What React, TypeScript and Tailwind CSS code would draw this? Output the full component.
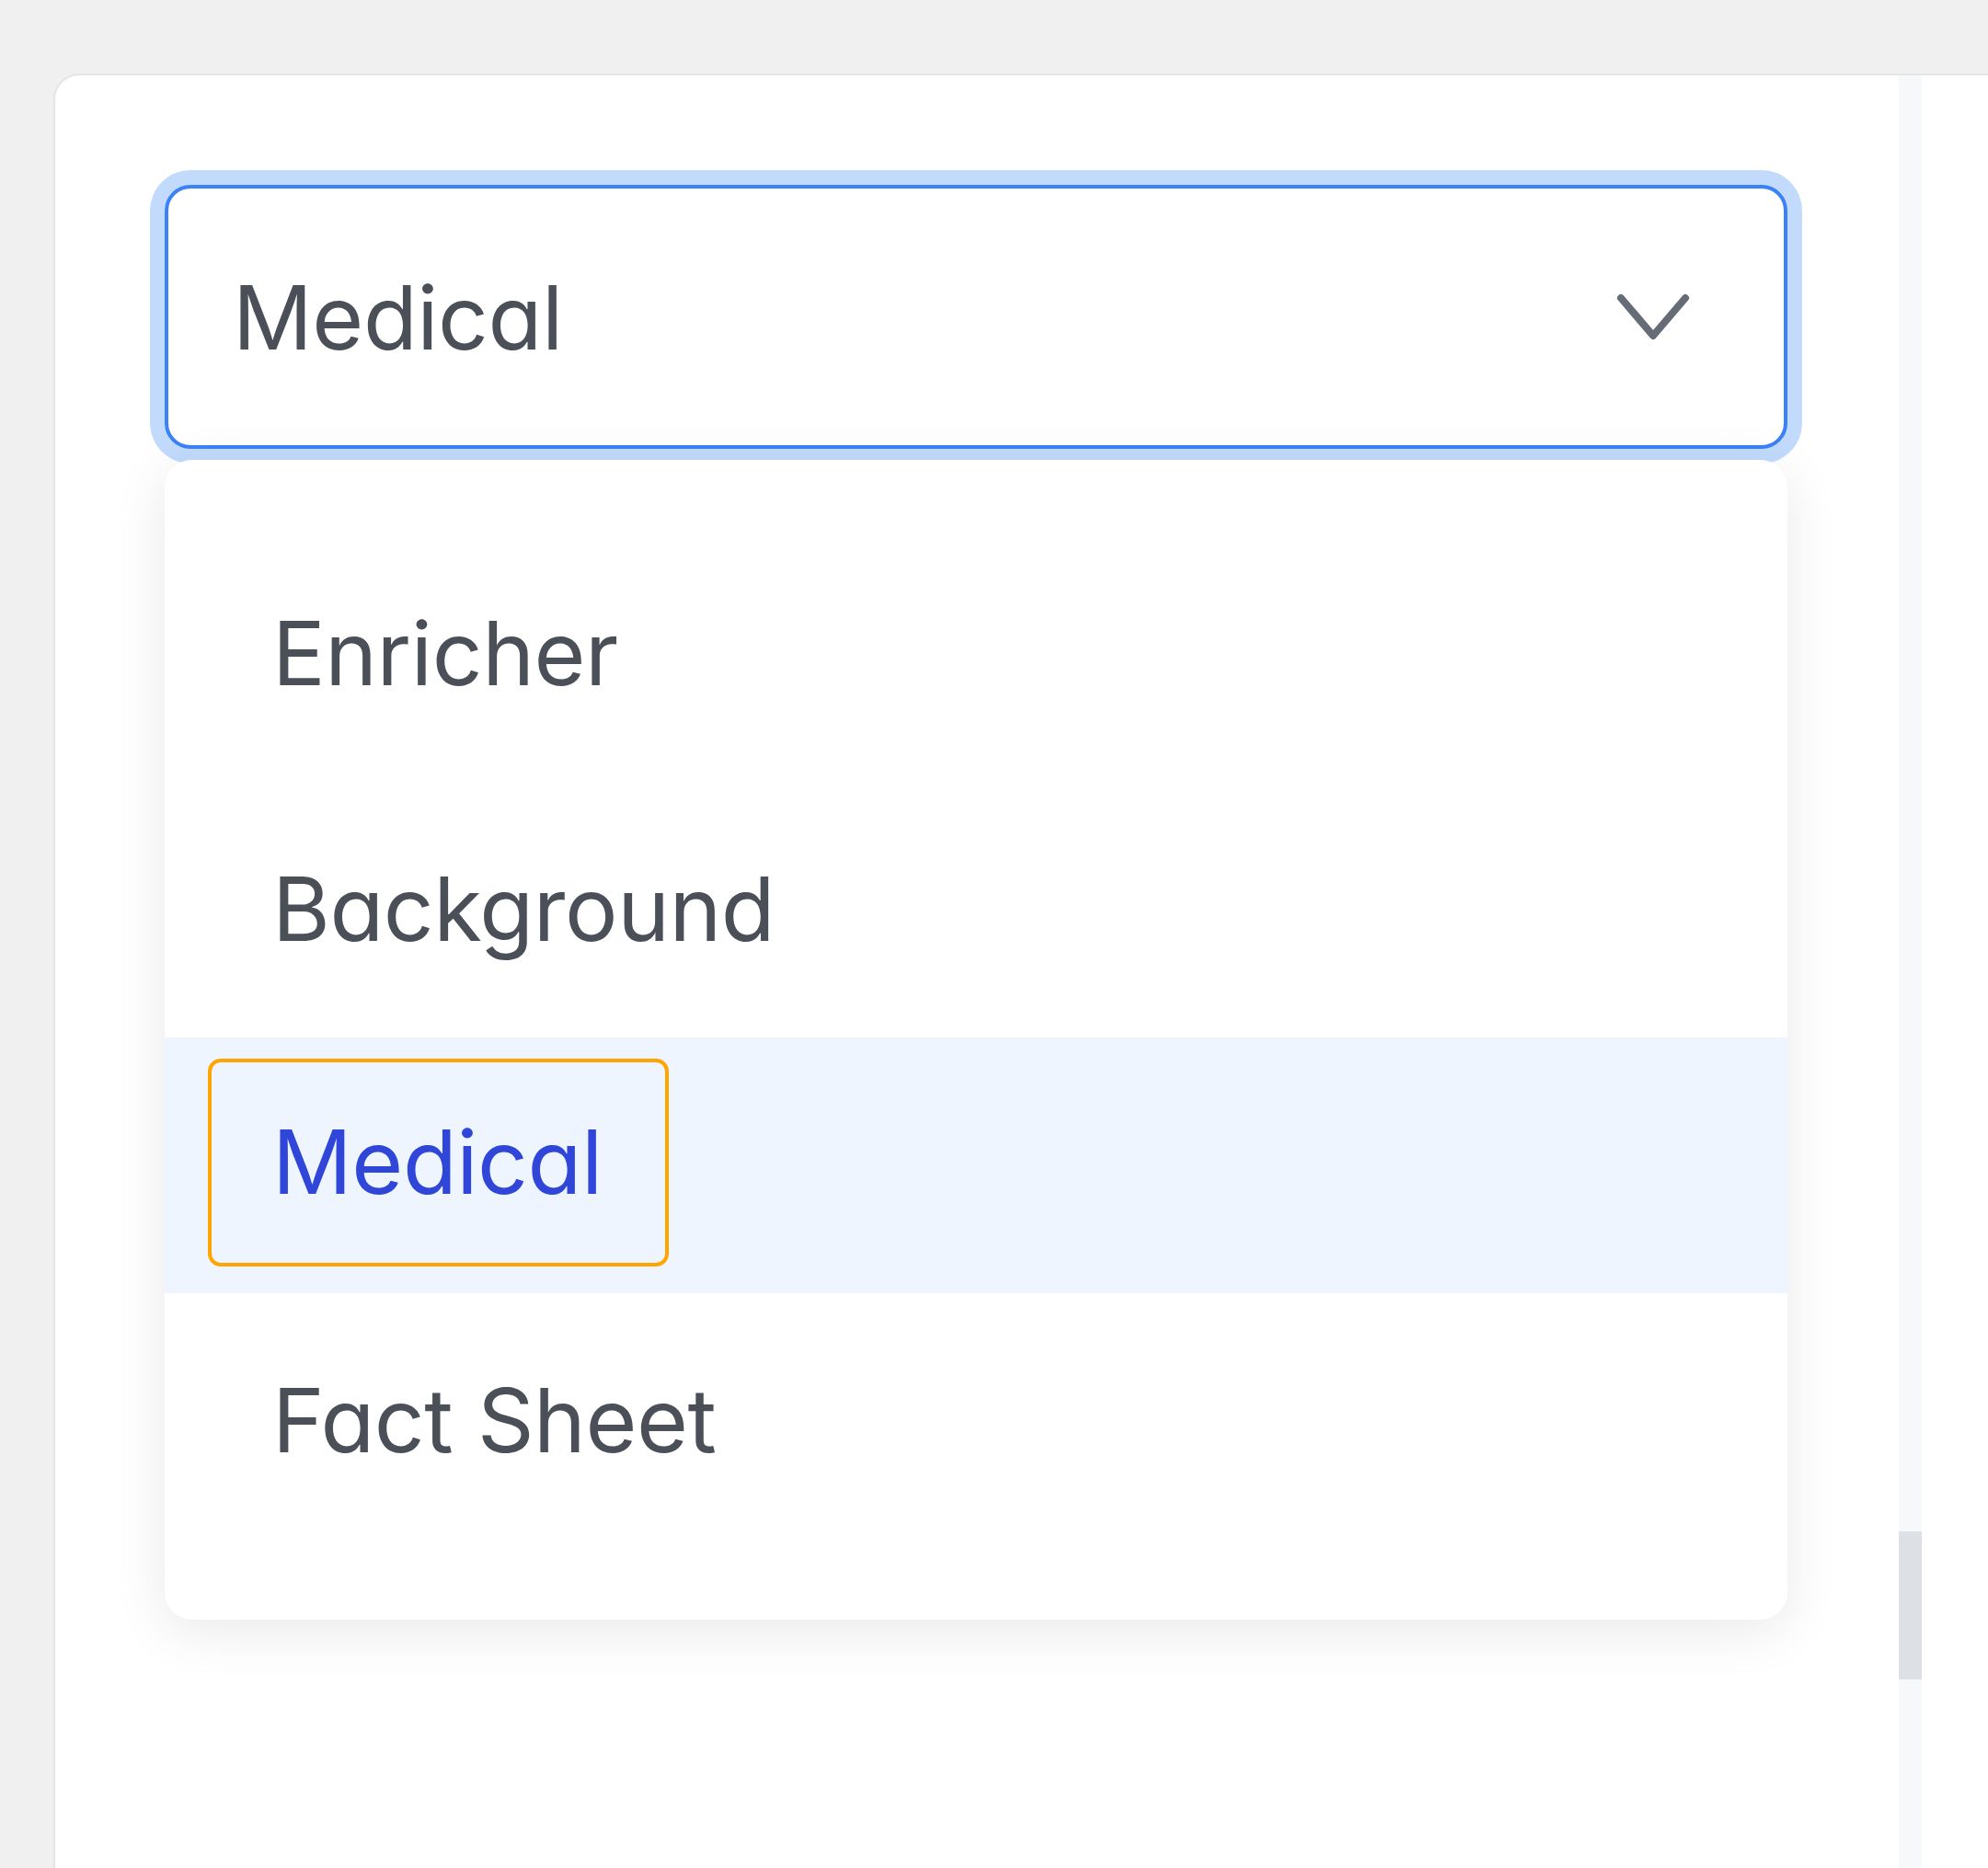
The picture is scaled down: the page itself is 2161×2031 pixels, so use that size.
import React from 'react';

const options = ['Enricher', 'Background', 'Medical', 'Fact Sheet'];

const fontStack = "font-['Inter','Noto_Sans',sans-serif] [font-feature-settings:'cv11'] tracking-[-0.025em]";

const Chevron = () => (
  <svg width="80" height="54" viewBox="0 0 80 54" fill="none">
    <path d="M5 6 L40 47 L75 6" stroke="#656c76" strokeWidth="8" strokeLinecap="round" strokeLinejoin="round" />
  </svg>
);

export default function App() {
  const selected = 'Medical';

  return (
    <div className={`min-h-screen bg-[#f0f0f0] pt-[80px] pl-[58px] ${fontStack}`}>
      <div className="flex h-[1951px] rounded-tl-[28px] border-l-2 border-t-2 border-[#e3e5e9] bg-white">
        {/* scrollable content */}
        <div className="flex-1 p-[119px] pr-[121px]">
          <div className="flex h-[287px] items-center justify-between rounded-[28px] border-4 border-[#3b82f6] bg-white pl-[70px] pr-[102px] shadow-[0_0_0_16px_#c2dbfd]">
            <span className="text-[96px] leading-none text-[#4b5058]">{selected}</span>
            <Chevron />
          </div>

          <div className="relative mt-[12px] rounded-[30px] bg-white pt-[72px] pb-[77px] shadow-[0_12px_60px_rgba(0,0,0,0.09)]">
            {options.map((opt) =>
              opt === selected ? (
                <div key={opt} className="flex h-[278px] items-center bg-[#eef5fe] pl-[47px]">
                  <span className="mb-[6px] rounded-[14px] border-4 border-[#ffa500] pl-[66px] pr-[68px] pt-[51px] pb-[52px] text-[96px] leading-[1.2] text-[#2f46d9]">
                    {opt}
                  </span>
                </div>
              ) : (
                <div key={opt} className="flex h-[278px] items-center pl-[117px]">
                  <span className="text-[96px] leading-[1.2] text-[#4b5058]">{opt}</span>
                </div>
              )
            )}
          </div>
        </div>

        {/* scrollbar */}
        <div className="w-[25px] bg-[#f7f8f9] pt-[1583px]">
          <div className="h-[161px] bg-[#dde0e4]" />
        </div>

        <div className="w-[72px]" />
      </div>
    </div>
  );
}
